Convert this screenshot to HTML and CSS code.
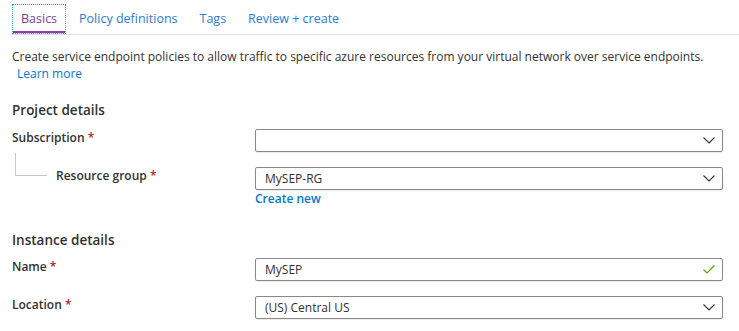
FILE: index.html
```html
<!DOCTYPE html>
<html lang="en">
<head>
    <meta charset="UTF-8">
    <title>Create a service endpoint policy</title>
    <link rel="stylesheet" href="styles.css">
</head>
<body>
    <div class="tabs">
        <div class="tab active">Basics</div>
        <div class="tab">Policy definitions</div>
        <div class="tab">Tags</div>
        <div class="tab">Review + create</div>
    </div>

    <p class="intro">
        Create service endpoint policies to allow traffic to specific azure resources from your virtual network over service endpoints.
        <br><a class="link learn" href="#">Learn more</a>
    </p>

    <h3 class="section">Project details</h3>
    <div class="row">
        <label class="label">Subscription <span class="req">*</span></label>
        <div class="field">
            <div class="input">
                <span class="value"></span>
                <svg class="chevron" width="12" height="7" viewBox="0 0 12 7"><path d="M0.5 0.5 L6 6 L11.5 0.5" fill="none" stroke="#323130" stroke-width="1.1"/></svg>
            </div>
        </div>
    </div>
    <div class="row">
        <label class="label child"><span class="tree"></span>Resource group <span class="req">*</span></label>
        <div class="field">
            <div class="input">
                <span class="value">MySEP-RG</span>
                <svg class="chevron" width="12" height="7" viewBox="0 0 12 7"><path d="M0.5 0.5 L6 6 L11.5 0.5" fill="none" stroke="#323130" stroke-width="1.1"/></svg>
            </div>
            <a class="link create" href="#">Create new</a>
        </div>
    </div>

    <h3 class="section instance">Instance details</h3>
    <div class="row">
        <label class="label">Name <span class="req">*</span></label>
        <div class="field">
            <div class="input">
                <span class="value">MySEP</span>
                <svg class="check" width="12" height="9" viewBox="0 0 12 9"><path d="M0.5 4.5 L4 8 L11.5 0.5" fill="none" stroke="#5ba300" stroke-width="1.2"/></svg>
            </div>
        </div>
    </div>
    <div class="row">
        <label class="label">Location <span class="req">*</span></label>
        <div class="field">
            <div class="input">
                <span class="value">(US) Central US</span>
                <svg class="chevron" width="12" height="7" viewBox="0 0 12 7"><path d="M0.5 0.5 L6 6 L11.5 0.5" fill="none" stroke="#323130" stroke-width="1.1"/></svg>
            </div>
        </div>
    </div>
</body>
</html>
```

FILE: styles.css
```css
body {
    font-family: 'Open Sans', 'Noto Sans', sans-serif;
    font-size: 12px;
    color: #323130;
    background: white;
    margin: 0;
    padding: 4px 16px 0 12px;
}

.tabs {
    display: flex;
    border-bottom: 1px solid #e1dfdd;
    margin-right: -16px;
}

.tab {
    height: 28px;
    line-height: 28px;
    padding: 0 8px;
    margin-right: 4px;
    font-size: 12.5px;
    color: #2b7cd3;
    border: 1px dotted transparent;
}

.tab.active {
    color: #7b3f9e;
    border-color: #1aa6e0;
    box-shadow: inset 0 -2px 0 #8a3db6;
}

.intro {
    margin: 13px 0 0;
    line-height: 17px;
}

.link {
    color: #0078d4;
    text-decoration: none;
}

.learn {
    margin-left: 5px;
}

.section {
    margin: 18px 0 9px;
    font-size: 13.5px;
    font-weight: 600;
    line-height: 20px;
}

.section.instance {
    margin-top: 23px;
    margin-bottom: 8px;
}

.row {
    display: grid;
    grid-template-columns: 243px 468px;
    margin-bottom: 15px;
}

.label {
    display: flex;
    align-items: flex-start;
    font-weight: 600;
    line-height: 17px;
    white-space: pre;
}

.req {
    color: #a4262c;
}

.tree {
    width: 31px;
    height: 22px;
    margin: -14px 9px 0 3px;
    border-left: 1px solid #c8c6c4;
    border-bottom: 1px solid #c8c6c4;
}

.input {
    height: 21px;
    display: flex;
    align-items: center;
    justify-content: space-between;
    padding: 0 7px 0 9px;
    border: 1px solid #8a8886;
    border-radius: 2px;
    box-shadow: 0 1px 1px rgba(0, 0, 0, 0.08);
}

.value {
    line-height: 17px;
}

.create {
    display: block;
    font-weight: 600;
    line-height: 17px;
}
```
